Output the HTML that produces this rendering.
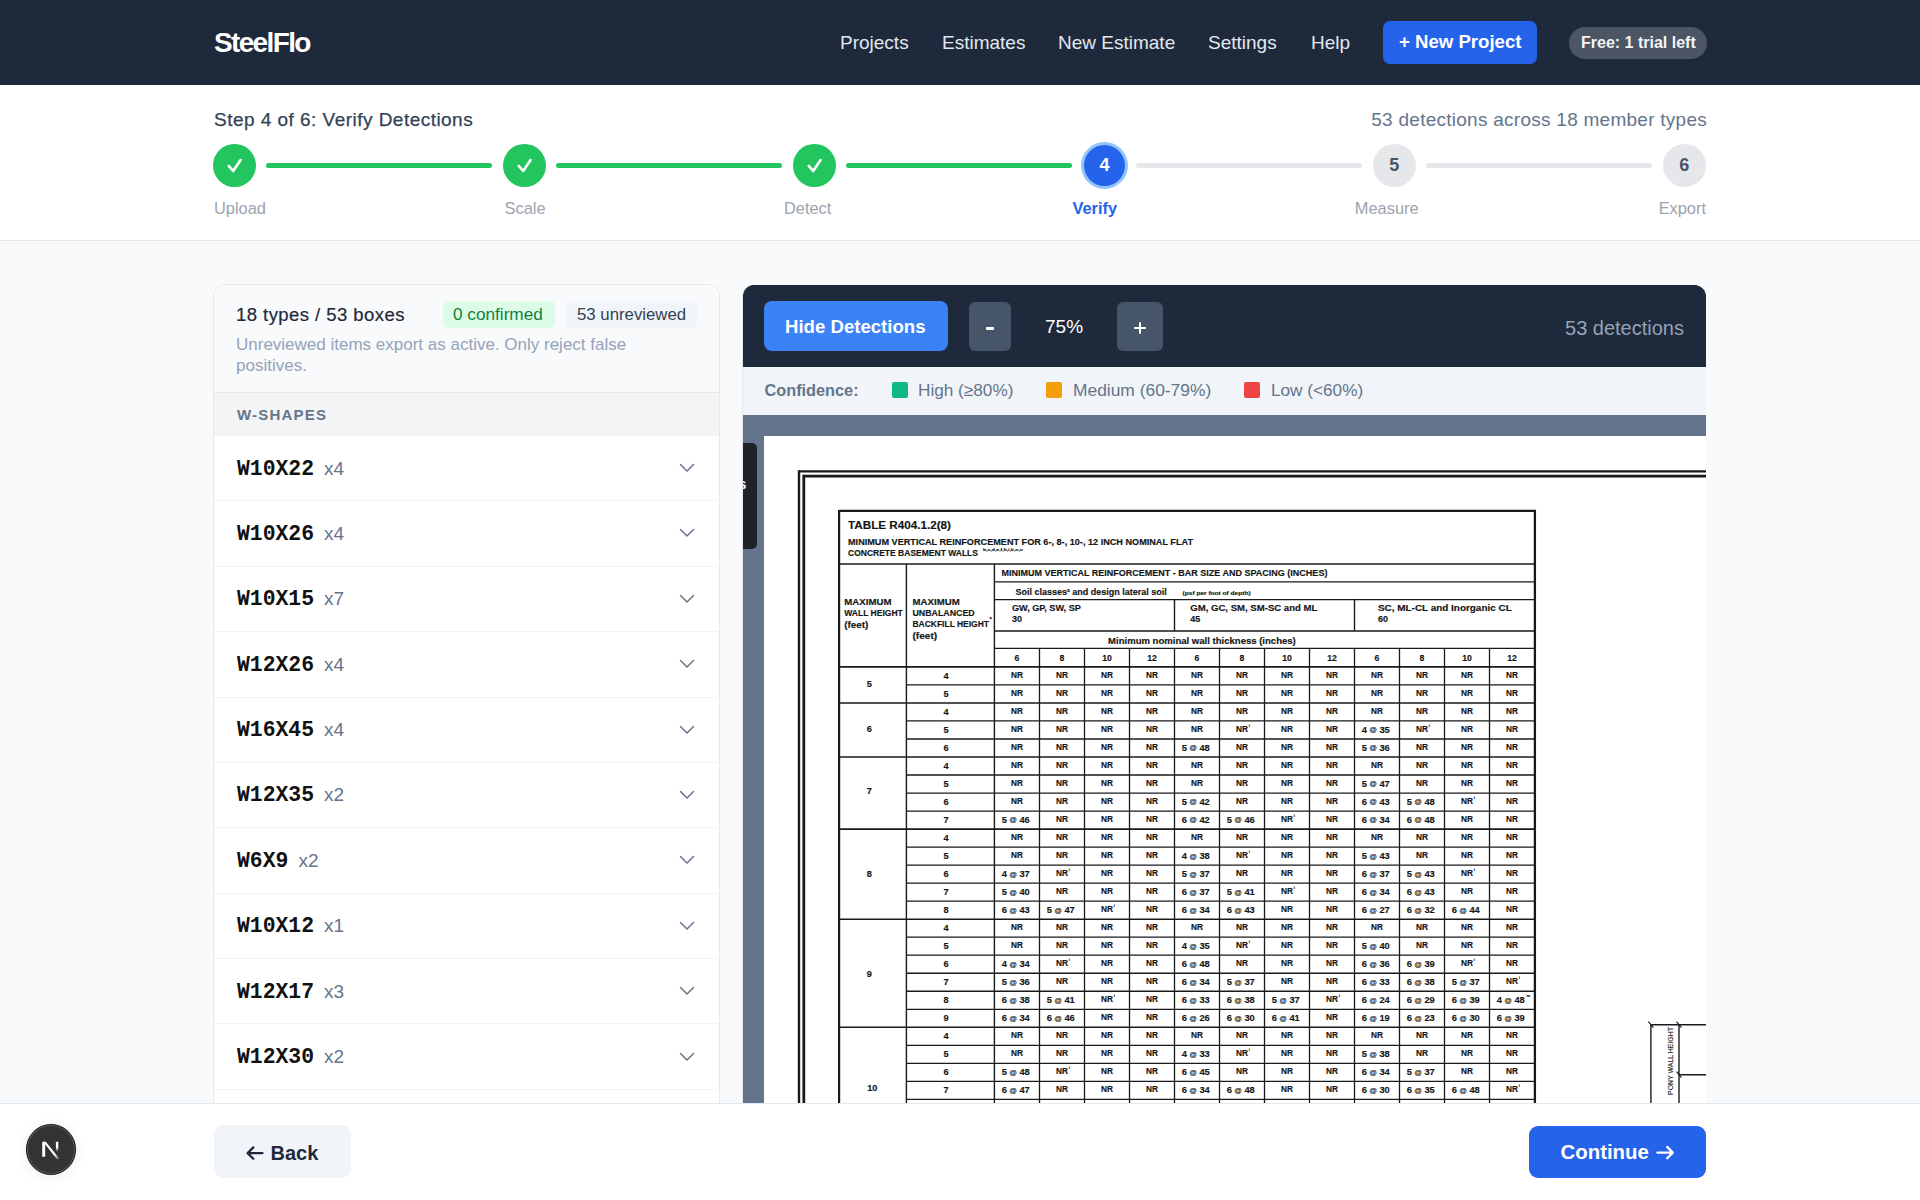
<!DOCTYPE html>
<html><head><meta charset="utf-8">
<style>
*{box-sizing:border-box;margin:0;padding:0}
html,body{width:1920px;height:1200px;overflow:hidden}
body{background:#f8fafc;position:relative;font-family:"Liberation Sans",sans-serif;color:#1e293b}
.a{position:absolute;white-space:nowrap;line-height:1}
#nav{position:absolute;left:0;top:0;width:1920px;height:85px;background:#1e293b;box-shadow:0 1px 2px rgba(0,0,0,.25)}
.nl{position:absolute;top:33px;font-size:19px;color:#e2e8f0;line-height:1}
#step{position:absolute;left:0;top:85px;width:1920px;height:156px;background:#fff;border-bottom:1px solid #e5e7eb}
.circ{position:absolute;width:42.6px;height:42.6px;border-radius:50%;top:59px}
.done{background:#22c55e}
.pend{background:#e5e7eb;color:#4b5563;font-size:18px;font-weight:700;text-align:center;line-height:42.6px}
.ln{position:absolute;top:77.8px;height:5px;border-radius:2.5px;width:226px}
.lbl{position:absolute;top:114.5px;font-size:16.4px;color:#9ca3af;line-height:1}
#left{position:absolute;left:213px;top:284px;width:507px;height:900px;background:#fff;border:1px solid #e5e7eb;border-radius:12px;overflow:hidden}
#lhead{position:absolute;left:0;top:0;width:505px;height:108px;background:#f9fafb;border-bottom:1px solid #e5e7eb}
#sec{position:absolute;left:0;top:108px;width:505px;height:43px;background:#f3f4f6}
.row{position:absolute;left:0;width:505px;height:65.39px;border-bottom:1px solid #f3f4f6;background:#fff}
.rn{position:absolute;left:23px;top:22.5px;font-family:"Liberation Mono",monospace;font-weight:700;font-size:21.4px;color:#111;line-height:1}
.rc{position:absolute;top:22.5px;font-size:19px;color:#64748b;line-height:1}
.chev{position:absolute;left:465px;top:27px;width:16px;height:10px}
#viewer{position:absolute;left:742px;top:285px;width:964px;height:900px;border-radius:12px;overflow:hidden;background:#64748b;border-left:1px solid #e2e8f0}
#tb{position:absolute;left:0;top:0;width:964px;height:82px;background:#1e293b}
#legend{position:absolute;left:0;top:82px;width:964px;height:48px;background:#f1f5f9}
#doc{position:absolute;left:21px;top:151px;width:960px;height:900px;background:#fff}
#foot{position:absolute;left:0;top:1103px;width:1920px;height:97px;background:#fff;border-top:1px solid #e2e8f0}
</style></head><body>
<div id="nav">
  <div class="a" style="left:214px;top:29px;font-size:28px;font-weight:700;color:#fff;letter-spacing:-1.65px">SteelFlo</div>
  <div class="nl" style="left:840px">Projects</div>
  <div class="nl" style="left:942px">Estimates</div>
  <div class="nl" style="left:1058px">New Estimate</div>
  <div class="nl" style="left:1208px">Settings</div>
  <div class="nl" style="left:1311px">Help</div>
  <div class="a" style="left:1383px;top:21px;width:154px;height:43px;background:#2563eb;border-radius:7px"></div>
  <div class="a" style="left:1399px;top:33px;font-size:18.6px;font-weight:700;color:#fff">+ New Project</div>
  <div class="a" style="left:1569px;top:26.5px;width:138px;height:32.5px;background:#4b5563;border-radius:16px"></div>
  <div class="a" style="left:1581px;top:34.5px;font-size:16px;font-weight:700;color:#f3f4f6">Free: 1 trial left</div>
</div>
<div id="step">
  <div class="a" style="left:214px;top:25.2px;font-size:19px;color:#334155;letter-spacing:0.47px;-webkit-text-stroke:0.25px #334155">Step 4 of 6: Verify Detections</div>
  <div class="a" style="right:213px;top:25px;font-size:19px;color:#64748b;letter-spacing:0.26px">53 detections across 18 member types</div>
  <div class="circ done" style="left:213px"><svg width="43" height="43" viewBox="0 0 43 43" style="position:absolute;left:0;top:0"><path d="M15.7 21.9 L20.2 27 L27.6 16" fill="none" stroke="#fff" stroke-width="2.6" stroke-linecap="round" stroke-linejoin="round"/></svg></div>
  <div class="circ done" style="left:503px"><svg width="43" height="43" viewBox="0 0 43 43" style="position:absolute;left:0;top:0"><path d="M15.7 21.9 L20.2 27 L27.6 16" fill="none" stroke="#fff" stroke-width="2.6" stroke-linecap="round" stroke-linejoin="round"/></svg></div>
  <div class="circ done" style="left:793px"><svg width="43" height="43" viewBox="0 0 43 43" style="position:absolute;left:0;top:0"><path d="M15.7 21.9 L20.2 27 L27.6 16" fill="none" stroke="#fff" stroke-width="2.6" stroke-linecap="round" stroke-linejoin="round"/></svg></div>
  <div class="circ" style="left:1080.8px;top:56.6px;width:47.4px;height:47.4px;background:#93c5fd"></div>
  <div class="circ" style="left:1083.7px;top:59.5px;width:41.6px;height:41.6px;background:#2563eb;color:#fff;font-size:18px;font-weight:700;text-align:center;line-height:41.6px">4</div>
  <div class="circ pend" style="left:1373px">5</div>
  <div class="circ pend" style="left:1663px">6</div>
  <div class="ln" style="left:266.3px;width:225.6px;background:#22c55e"></div>
  <div class="ln" style="left:556.3px;width:225.6px;background:#22c55e"></div>
  <div class="ln" style="left:846.3px;width:225.6px;background:#22c55e"></div>
  <div class="ln" style="left:1136.3px;width:225.6px;background:#e5e7eb"></div>
  <div class="ln" style="left:1426.3px;width:225.6px;background:#e5e7eb"></div>
  <div class="lbl" style="left:214px">Upload</div>
  <div class="lbl" style="left:504.6px">Scale</div>
  <div class="lbl" style="left:784px">Detect</div>
  <div class="lbl" style="left:1072.4px;color:#2563eb;font-weight:700">Verify</div>
  <div class="lbl" style="left:1354.8px">Measure</div>
  <div class="lbl" style="right:214px">Export</div>
</div>
<div id="left">
  <div id="lhead">
    <div class="a" style="left:22px;top:21px;font-size:18.5px;color:#1e293b;letter-spacing:0.45px;-webkit-text-stroke:0.2px #1e293b">18 types / 53 boxes</div>
    <div class="a" style="left:229px;top:16px;width:112px;height:27px;background:#dcfce7;border-radius:5px"></div>
    <div class="a" style="left:239px;top:21px;font-size:17.2px;color:#15803d">0 confirmed</div>
    <div class="a" style="left:352px;top:16px;width:131px;height:27px;background:#f1f5f9;border-radius:5px"></div>
    <div class="a" style="left:363px;top:22px;font-size:16.8px;color:#334155">53 unreviewed</div>
    <div class="a" style="left:22px;top:49px;font-size:17px;color:#94a3b8;line-height:21.3px;white-space:normal;width:420px">Unreviewed items export as active. Only reject false positives.</div>
  </div>
  <div id="sec"><div class="a" style="left:23px;top:14px;font-size:15px;font-weight:700;color:#64748b;letter-spacing:1.2px">W-SHAPES</div></div>
  <div class="row" style="top:151.00px"><div class="rn">W10X22</div><div class="rc" style="left:110.0px">x4</div><svg class="chev" viewBox="0 0 16 10"><path d="M1.5 1.5 L8 8 L14.5 1.5" fill="none" stroke="#64748b" stroke-width="1.5" stroke-linecap="round" stroke-linejoin="round"/></svg></div>
  <div class="row" style="top:216.39px"><div class="rn">W10X26</div><div class="rc" style="left:110.0px">x4</div><svg class="chev" viewBox="0 0 16 10"><path d="M1.5 1.5 L8 8 L14.5 1.5" fill="none" stroke="#64748b" stroke-width="1.5" stroke-linecap="round" stroke-linejoin="round"/></svg></div>
  <div class="row" style="top:281.78px"><div class="rn">W10X15</div><div class="rc" style="left:110.0px">x7</div><svg class="chev" viewBox="0 0 16 10"><path d="M1.5 1.5 L8 8 L14.5 1.5" fill="none" stroke="#64748b" stroke-width="1.5" stroke-linecap="round" stroke-linejoin="round"/></svg></div>
  <div class="row" style="top:347.17px"><div class="rn">W12X26</div><div class="rc" style="left:110.0px">x4</div><svg class="chev" viewBox="0 0 16 10"><path d="M1.5 1.5 L8 8 L14.5 1.5" fill="none" stroke="#64748b" stroke-width="1.5" stroke-linecap="round" stroke-linejoin="round"/></svg></div>
  <div class="row" style="top:412.56px"><div class="rn">W16X45</div><div class="rc" style="left:110.0px">x4</div><svg class="chev" viewBox="0 0 16 10"><path d="M1.5 1.5 L8 8 L14.5 1.5" fill="none" stroke="#64748b" stroke-width="1.5" stroke-linecap="round" stroke-linejoin="round"/></svg></div>
  <div class="row" style="top:477.95px"><div class="rn">W12X35</div><div class="rc" style="left:110.0px">x2</div><svg class="chev" viewBox="0 0 16 10"><path d="M1.5 1.5 L8 8 L14.5 1.5" fill="none" stroke="#64748b" stroke-width="1.5" stroke-linecap="round" stroke-linejoin="round"/></svg></div>
  <div class="row" style="top:543.34px"><div class="rn">W6X9</div><div class="rc" style="left:84.4px">x2</div><svg class="chev" viewBox="0 0 16 10"><path d="M1.5 1.5 L8 8 L14.5 1.5" fill="none" stroke="#64748b" stroke-width="1.5" stroke-linecap="round" stroke-linejoin="round"/></svg></div>
  <div class="row" style="top:608.73px"><div class="rn">W10X12</div><div class="rc" style="left:110.0px">x1</div><svg class="chev" viewBox="0 0 16 10"><path d="M1.5 1.5 L8 8 L14.5 1.5" fill="none" stroke="#64748b" stroke-width="1.5" stroke-linecap="round" stroke-linejoin="round"/></svg></div>
  <div class="row" style="top:674.12px"><div class="rn">W12X17</div><div class="rc" style="left:110.0px">x3</div><svg class="chev" viewBox="0 0 16 10"><path d="M1.5 1.5 L8 8 L14.5 1.5" fill="none" stroke="#64748b" stroke-width="1.5" stroke-linecap="round" stroke-linejoin="round"/></svg></div>
  <div class="row" style="top:739.51px"><div class="rn">W12X30</div><div class="rc" style="left:110.0px">x2</div><svg class="chev" viewBox="0 0 16 10"><path d="M1.5 1.5 L8 8 L14.5 1.5" fill="none" stroke="#64748b" stroke-width="1.5" stroke-linecap="round" stroke-linejoin="round"/></svg></div>
  <div class="row" style="top:804.90px"><div class="rn">W14X22</div><div class="rc" style="left:110.0px">x2</div><svg class="chev" viewBox="0 0 16 10"><path d="M1.5 1.5 L8 8 L14.5 1.5" fill="none" stroke="#64748b" stroke-width="1.5" stroke-linecap="round" stroke-linejoin="round"/></svg></div>
  <div class="row" style="top:870.29px"><div class="rn">W8X10</div><div class="rc" style="left:97.2px">x1</div><svg class="chev" viewBox="0 0 16 10"><path d="M1.5 1.5 L8 8 L14.5 1.5" fill="none" stroke="#64748b" stroke-width="1.5" stroke-linecap="round" stroke-linejoin="round"/></svg></div>
</div>
<div id="viewer">
  <div id="tb">
    <div class="a" style="left:21px;top:16px;width:184px;height:50px;background:#3b82f6;border-radius:8px"></div>
    <div class="a" style="left:42px;top:33px;font-size:18.6px;font-weight:700;color:#fff">Hide Detections</div>
    <div class="a" style="left:226px;top:17px;width:42px;height:49px;background:#475569;border-radius:6px"></div>
    <div class="a" style="left:243.25px;top:42.1px;width:7.8px;height:2.6px;background:#fff;border-radius:1px"></div>
    <div class="a" style="left:302px;top:32px;font-size:19px;color:#fff">75%</div>
    <div class="a" style="left:374px;top:17px;width:46px;height:49px;background:#475569;border-radius:6px"></div>
    <div class="a" style="left:391.3px;top:42.4px;width:11.7px;height:2.1px;background:#fff;border-radius:1px"></div><div class="a" style="left:396.3px;top:37.3px;width:2.05px;height:12.2px;background:#fff;border-radius:1px"></div>
    <div class="a" style="right:23px;top:33px;font-size:20px;color:#94a3b8">53 detections</div>
  </div>
  <div id="legend">
    <div class="a" style="left:21.5px;top:15px;font-size:16.3px;font-weight:700;color:#64748b">Confidence:</div>
    <div class="a" style="left:149px;top:15px;width:16px;height:16px;background:#10b981;border-radius:2px"></div>
    <div class="a" style="left:175px;top:15px;font-size:17.2px;color:#64748b">High (≥80%)</div>
    <div class="a" style="left:303px;top:15px;width:16px;height:16px;background:#f59e0b;border-radius:2px"></div>
    <div class="a" style="left:330px;top:15px;font-size:17.4px;color:#64748b">Medium (60-79%)</div>
    <div class="a" style="left:501px;top:15px;width:16px;height:16px;background:#ef4444;border-radius:2px"></div>
    <div class="a" style="left:528px;top:15px;font-size:17.2px;color:#64748b">Low (&lt;60%)</div>
  </div>
  <div id="doc"><svg width="960" height="900" viewBox="0 0 960 900" style="position:absolute;left:0;top:0;font-family:'Liberation Sans',sans-serif" font-weight="700" fill="#151515" stroke="#151515" stroke-width="0.15"><line x1="35.00" y1="35.35" x2="956.00" y2="35.35" stroke="#1a1a1a" stroke-width="2.4"/><line x1="35.00" y1="34.20" x2="35.00" y2="684.00" stroke="#1a1a1a" stroke-width="2.4"/><line x1="39.80" y1="40.15" x2="956.00" y2="40.15" stroke="#1a1a1a" stroke-width="2.8"/><line x1="39.80" y1="38.80" x2="39.80" y2="684.00" stroke="#1a1a1a" stroke-width="2.8"/><line x1="75.10" y1="74.90" x2="771.90" y2="74.90" stroke="#1a1a1a" stroke-width="2.3"/><line x1="75.10" y1="73.90" x2="75.10" y2="684.00" stroke="#1a1a1a" stroke-width="2.2"/><line x1="770.90" y1="73.90" x2="770.90" y2="684.00" stroke="#1a1a1a" stroke-width="2.3"/><line x1="75.10" y1="127.90" x2="770.90" y2="127.90" stroke="#1a1a1a" stroke-width="1.5"/><line x1="142.40" y1="127.90" x2="142.40" y2="684.00" stroke="#1a1a1a" stroke-width="1.4"/><line x1="230.40" y1="127.90" x2="230.40" y2="684.00" stroke="#1a1a1a" stroke-width="1.4"/><line x1="230.40" y1="145.90" x2="770.90" y2="145.90" stroke="#1a1a1a" stroke-width="1.4"/><line x1="230.40" y1="163.60" x2="770.90" y2="163.60" stroke="#1a1a1a" stroke-width="1.4"/><line x1="230.40" y1="195.00" x2="770.90" y2="195.00" stroke="#1a1a1a" stroke-width="1.4"/><line x1="230.40" y1="212.40" x2="770.90" y2="212.40" stroke="#1a1a1a" stroke-width="1.4"/><line x1="410.50" y1="163.60" x2="410.50" y2="195.00" stroke="#1a1a1a" stroke-width="1.4"/><line x1="590.50" y1="163.60" x2="590.50" y2="195.00" stroke="#1a1a1a" stroke-width="1.4"/><line x1="275.50" y1="212.40" x2="275.50" y2="684.00" stroke="#1a1a1a" stroke-width="1.3"/><line x1="320.50" y1="212.40" x2="320.50" y2="684.00" stroke="#1a1a1a" stroke-width="1.3"/><line x1="365.50" y1="212.40" x2="365.50" y2="684.00" stroke="#1a1a1a" stroke-width="1.3"/><line x1="410.50" y1="212.40" x2="410.50" y2="684.00" stroke="#1a1a1a" stroke-width="1.3"/><line x1="455.50" y1="212.40" x2="455.50" y2="684.00" stroke="#1a1a1a" stroke-width="1.3"/><line x1="500.50" y1="212.40" x2="500.50" y2="684.00" stroke="#1a1a1a" stroke-width="1.3"/><line x1="545.50" y1="212.40" x2="545.50" y2="684.00" stroke="#1a1a1a" stroke-width="1.3"/><line x1="590.50" y1="212.40" x2="590.50" y2="684.00" stroke="#1a1a1a" stroke-width="1.3"/><line x1="635.50" y1="212.40" x2="635.50" y2="684.00" stroke="#1a1a1a" stroke-width="1.3"/><line x1="680.50" y1="212.40" x2="680.50" y2="684.00" stroke="#1a1a1a" stroke-width="1.3"/><line x1="725.50" y1="212.40" x2="725.50" y2="684.00" stroke="#1a1a1a" stroke-width="1.3"/><line x1="75.10" y1="230.90" x2="770.90" y2="230.90" stroke="#1a1a1a" stroke-width="1.6"/><line x1="142.40" y1="248.92" x2="770.90" y2="248.92" stroke="#1a1a1a" stroke-width="1.3"/><line x1="75.10" y1="266.94" x2="770.90" y2="266.94" stroke="#1a1a1a" stroke-width="1.6"/><line x1="142.40" y1="284.96" x2="770.90" y2="284.96" stroke="#1a1a1a" stroke-width="1.3"/><line x1="142.40" y1="302.98" x2="770.90" y2="302.98" stroke="#1a1a1a" stroke-width="1.3"/><line x1="75.10" y1="321.00" x2="770.90" y2="321.00" stroke="#1a1a1a" stroke-width="1.6"/><line x1="142.40" y1="339.02" x2="770.90" y2="339.02" stroke="#1a1a1a" stroke-width="1.3"/><line x1="142.40" y1="357.04" x2="770.90" y2="357.04" stroke="#1a1a1a" stroke-width="1.3"/><line x1="142.40" y1="375.06" x2="770.90" y2="375.06" stroke="#1a1a1a" stroke-width="1.3"/><line x1="75.10" y1="393.08" x2="770.90" y2="393.08" stroke="#1a1a1a" stroke-width="1.6"/><line x1="142.40" y1="411.10" x2="770.90" y2="411.10" stroke="#1a1a1a" stroke-width="1.3"/><line x1="142.40" y1="429.12" x2="770.90" y2="429.12" stroke="#1a1a1a" stroke-width="1.3"/><line x1="142.40" y1="447.14" x2="770.90" y2="447.14" stroke="#1a1a1a" stroke-width="1.3"/><line x1="142.40" y1="465.16" x2="770.90" y2="465.16" stroke="#1a1a1a" stroke-width="1.3"/><line x1="75.10" y1="483.18" x2="770.90" y2="483.18" stroke="#1a1a1a" stroke-width="1.6"/><line x1="142.40" y1="501.20" x2="770.90" y2="501.20" stroke="#1a1a1a" stroke-width="1.3"/><line x1="142.40" y1="519.22" x2="770.90" y2="519.22" stroke="#1a1a1a" stroke-width="1.3"/><line x1="142.40" y1="537.24" x2="770.90" y2="537.24" stroke="#1a1a1a" stroke-width="1.3"/><line x1="142.40" y1="555.26" x2="770.90" y2="555.26" stroke="#1a1a1a" stroke-width="1.3"/><line x1="142.40" y1="573.28" x2="770.90" y2="573.28" stroke="#1a1a1a" stroke-width="1.3"/><line x1="75.10" y1="591.30" x2="770.90" y2="591.30" stroke="#1a1a1a" stroke-width="1.6"/><line x1="142.40" y1="609.32" x2="770.90" y2="609.32" stroke="#1a1a1a" stroke-width="1.3"/><line x1="142.40" y1="627.34" x2="770.90" y2="627.34" stroke="#1a1a1a" stroke-width="1.3"/><line x1="142.40" y1="645.36" x2="770.90" y2="645.36" stroke="#1a1a1a" stroke-width="1.3"/><line x1="142.40" y1="663.38" x2="770.90" y2="663.38" stroke="#1a1a1a" stroke-width="1.3"/><line x1="142.40" y1="681.40" x2="770.90" y2="681.40" stroke="#1a1a1a" stroke-width="1.3"/><text x="84.00" y="93.30" font-size="11.5" text-anchor="start" textLength="103" lengthAdjust="spacingAndGlyphs">TABLE R404.1.2(8)</text><text x="84.00" y="109.00" font-size="8.4" text-anchor="start" textLength="345" lengthAdjust="spacingAndGlyphs">MINIMUM VERTICAL REINFORCEMENT FOR 6-, 8-, 10-, 12 INCH NOMINAL FLAT</text><text x="84.00" y="119.80" font-size="8.4" text-anchor="start" textLength="130" lengthAdjust="spacingAndGlyphs">CONCRETE BASEMENT WALLS</text><text x="219.00" y="114.50" font-size="4.2" text-anchor="start" textLength="40" lengthAdjust="spacingAndGlyphs">b,c,d,e,f,h,i,k,n,o</text><text x="80.30" y="169.20" font-size="8.6" text-anchor="start" textLength="47.2" lengthAdjust="spacingAndGlyphs">MAXIMUM</text><text x="80.30" y="180.40" font-size="8.6" text-anchor="start" textLength="58.5" lengthAdjust="spacingAndGlyphs">WALL HEIGHT</text><text x="80.30" y="191.60" font-size="8.6" text-anchor="start" textLength="24" lengthAdjust="spacingAndGlyphs">(feet)</text><text x="148.50" y="169.20" font-size="8.6" text-anchor="start" textLength="47.2" lengthAdjust="spacingAndGlyphs">MAXIMUM</text><text x="148.50" y="180.30" font-size="8.6" text-anchor="start" textLength="62.2" lengthAdjust="spacingAndGlyphs">UNBALANCED</text><text x="148.50" y="191.40" font-size="8.6" text-anchor="start" textLength="76.5" lengthAdjust="spacingAndGlyphs">BACKFILL HEIGHT</text><text x="148.50" y="202.50" font-size="8.6" text-anchor="start" textLength="24.7" lengthAdjust="spacingAndGlyphs">(feet)</text><text x="225.50" y="184.50" font-size="6" text-anchor="start">*</text><text x="237.40" y="139.90" font-size="9" text-anchor="start" textLength="326" lengthAdjust="spacingAndGlyphs">MINIMUM VERTICAL REINFORCEMENT - BAR SIZE AND SPACING (INCHES)</text><text x="251.50" y="158.70" font-size="9" text-anchor="start">Soil classes<tspan font-size="5" dy="-3">a</tspan><tspan dy="3"> and design lateral soil</tspan></text><text x="418.60" y="158.70" font-size="5.3" text-anchor="start" textLength="68" lengthAdjust="spacingAndGlyphs">(psf per foot of depth)</text><text x="247.90" y="174.70" font-size="9" text-anchor="start" textLength="69" lengthAdjust="spacingAndGlyphs">GW, GP, SW, SP</text><text x="247.90" y="186.40" font-size="9" text-anchor="start">30</text><text x="426.30" y="174.70" font-size="9" text-anchor="start" textLength="127" lengthAdjust="spacingAndGlyphs">GM, GC, SM, SM-SC and ML</text><text x="426.30" y="186.40" font-size="9" text-anchor="start">45</text><text x="614.00" y="174.70" font-size="9" text-anchor="start" textLength="133.7" lengthAdjust="spacingAndGlyphs">SC, ML-CL and Inorganic CL</text><text x="614.00" y="186.40" font-size="9" text-anchor="start">60</text><text x="344.10" y="207.70" font-size="9" text-anchor="start" textLength="187.7" lengthAdjust="spacingAndGlyphs">Minimum nominal wall thickness (inches)</text><text x="253.00" y="225.20" font-size="8.7" text-anchor="middle">6</text><text x="298.00" y="225.20" font-size="8.7" text-anchor="middle">8</text><text x="343.00" y="225.20" font-size="8.7" text-anchor="middle">10</text><text x="388.00" y="225.20" font-size="8.7" text-anchor="middle">12</text><text x="433.00" y="225.20" font-size="8.7" text-anchor="middle">6</text><text x="478.00" y="225.20" font-size="8.7" text-anchor="middle">8</text><text x="523.00" y="225.20" font-size="8.7" text-anchor="middle">10</text><text x="568.00" y="225.20" font-size="8.7" text-anchor="middle">12</text><text x="613.00" y="225.20" font-size="8.7" text-anchor="middle">6</text><text x="658.00" y="225.20" font-size="8.7" text-anchor="middle">8</text><text x="703.00" y="225.20" font-size="8.7" text-anchor="middle">10</text><text x="748.00" y="225.20" font-size="8.7" text-anchor="middle">12</text><text x="105.40" y="251.22" font-size="9.2" text-anchor="middle">5</text><text x="182.00" y="242.50" font-size="9.2" text-anchor="middle">4</text><text x="253.00" y="241.90" font-size="9.2" text-anchor="middle" textLength="12" lengthAdjust="spacingAndGlyphs">NR</text><text x="298.00" y="241.90" font-size="9.2" text-anchor="middle" textLength="12" lengthAdjust="spacingAndGlyphs">NR</text><text x="343.00" y="241.90" font-size="9.2" text-anchor="middle" textLength="12" lengthAdjust="spacingAndGlyphs">NR</text><text x="388.00" y="241.90" font-size="9.2" text-anchor="middle" textLength="12" lengthAdjust="spacingAndGlyphs">NR</text><text x="433.00" y="241.90" font-size="9.2" text-anchor="middle" textLength="12" lengthAdjust="spacingAndGlyphs">NR</text><text x="478.00" y="241.90" font-size="9.2" text-anchor="middle" textLength="12" lengthAdjust="spacingAndGlyphs">NR</text><text x="523.00" y="241.90" font-size="9.2" text-anchor="middle" textLength="12" lengthAdjust="spacingAndGlyphs">NR</text><text x="568.00" y="241.90" font-size="9.2" text-anchor="middle" textLength="12" lengthAdjust="spacingAndGlyphs">NR</text><text x="613.00" y="241.90" font-size="9.2" text-anchor="middle" textLength="12" lengthAdjust="spacingAndGlyphs">NR</text><text x="658.00" y="241.90" font-size="9.2" text-anchor="middle" textLength="12" lengthAdjust="spacingAndGlyphs">NR</text><text x="703.00" y="241.90" font-size="9.2" text-anchor="middle" textLength="12" lengthAdjust="spacingAndGlyphs">NR</text><text x="748.00" y="241.90" font-size="9.2" text-anchor="middle" textLength="12" lengthAdjust="spacingAndGlyphs">NR</text><text x="182.00" y="260.52" font-size="9.2" text-anchor="middle">5</text><text x="253.00" y="259.92" font-size="9.2" text-anchor="middle" textLength="12" lengthAdjust="spacingAndGlyphs">NR</text><text x="298.00" y="259.92" font-size="9.2" text-anchor="middle" textLength="12" lengthAdjust="spacingAndGlyphs">NR</text><text x="343.00" y="259.92" font-size="9.2" text-anchor="middle" textLength="12" lengthAdjust="spacingAndGlyphs">NR</text><text x="388.00" y="259.92" font-size="9.2" text-anchor="middle" textLength="12" lengthAdjust="spacingAndGlyphs">NR</text><text x="433.00" y="259.92" font-size="9.2" text-anchor="middle" textLength="12" lengthAdjust="spacingAndGlyphs">NR</text><text x="478.00" y="259.92" font-size="9.2" text-anchor="middle" textLength="12" lengthAdjust="spacingAndGlyphs">NR</text><text x="523.00" y="259.92" font-size="9.2" text-anchor="middle" textLength="12" lengthAdjust="spacingAndGlyphs">NR</text><text x="568.00" y="259.92" font-size="9.2" text-anchor="middle" textLength="12" lengthAdjust="spacingAndGlyphs">NR</text><text x="613.00" y="259.92" font-size="9.2" text-anchor="middle" textLength="12" lengthAdjust="spacingAndGlyphs">NR</text><text x="658.00" y="259.92" font-size="9.2" text-anchor="middle" textLength="12" lengthAdjust="spacingAndGlyphs">NR</text><text x="703.00" y="259.92" font-size="9.2" text-anchor="middle" textLength="12" lengthAdjust="spacingAndGlyphs">NR</text><text x="748.00" y="259.92" font-size="9.2" text-anchor="middle" textLength="12" lengthAdjust="spacingAndGlyphs">NR</text><text x="105.40" y="296.27" font-size="9.2" text-anchor="middle">6</text><text x="182.00" y="278.54" font-size="9.2" text-anchor="middle">4</text><text x="253.00" y="277.94" font-size="9.2" text-anchor="middle" textLength="12" lengthAdjust="spacingAndGlyphs">NR</text><text x="298.00" y="277.94" font-size="9.2" text-anchor="middle" textLength="12" lengthAdjust="spacingAndGlyphs">NR</text><text x="343.00" y="277.94" font-size="9.2" text-anchor="middle" textLength="12" lengthAdjust="spacingAndGlyphs">NR</text><text x="388.00" y="277.94" font-size="9.2" text-anchor="middle" textLength="12" lengthAdjust="spacingAndGlyphs">NR</text><text x="433.00" y="277.94" font-size="9.2" text-anchor="middle" textLength="12" lengthAdjust="spacingAndGlyphs">NR</text><text x="478.00" y="277.94" font-size="9.2" text-anchor="middle" textLength="12" lengthAdjust="spacingAndGlyphs">NR</text><text x="523.00" y="277.94" font-size="9.2" text-anchor="middle" textLength="12" lengthAdjust="spacingAndGlyphs">NR</text><text x="568.00" y="277.94" font-size="9.2" text-anchor="middle" textLength="12" lengthAdjust="spacingAndGlyphs">NR</text><text x="613.00" y="277.94" font-size="9.2" text-anchor="middle" textLength="12" lengthAdjust="spacingAndGlyphs">NR</text><text x="658.00" y="277.94" font-size="9.2" text-anchor="middle" textLength="12" lengthAdjust="spacingAndGlyphs">NR</text><text x="703.00" y="277.94" font-size="9.2" text-anchor="middle" textLength="12" lengthAdjust="spacingAndGlyphs">NR</text><text x="748.00" y="277.94" font-size="9.2" text-anchor="middle" textLength="12" lengthAdjust="spacingAndGlyphs">NR</text><text x="182.00" y="296.56" font-size="9.2" text-anchor="middle">5</text><text x="253.00" y="295.96" font-size="9.2" text-anchor="middle" textLength="12" lengthAdjust="spacingAndGlyphs">NR</text><text x="298.00" y="295.96" font-size="9.2" text-anchor="middle" textLength="12" lengthAdjust="spacingAndGlyphs">NR</text><text x="343.00" y="295.96" font-size="9.2" text-anchor="middle" textLength="12" lengthAdjust="spacingAndGlyphs">NR</text><text x="388.00" y="295.96" font-size="9.2" text-anchor="middle" textLength="12" lengthAdjust="spacingAndGlyphs">NR</text><text x="433.00" y="295.96" font-size="9.2" text-anchor="middle" textLength="12" lengthAdjust="spacingAndGlyphs">NR</text><text x="478.00" y="295.96" font-size="9.2" text-anchor="middle" textLength="12" lengthAdjust="spacingAndGlyphs">NR</text><text x="484.80" y="290.96" font-size="4.2" text-anchor="start">i</text><text x="523.00" y="295.96" font-size="9.2" text-anchor="middle" textLength="12" lengthAdjust="spacingAndGlyphs">NR</text><text x="568.00" y="295.96" font-size="9.2" text-anchor="middle" textLength="12" lengthAdjust="spacingAndGlyphs">NR</text><text x="611.80" y="296.66" font-size="9.6" text-anchor="middle" textLength="28" lengthAdjust="spacingAndGlyphs">4 <tspan font-size="7.6" dy="-0.3">@</tspan><tspan dy="0.3"> 35</tspan></text><text x="658.00" y="295.96" font-size="9.2" text-anchor="middle" textLength="12" lengthAdjust="spacingAndGlyphs">NR</text><text x="664.80" y="290.96" font-size="4.2" text-anchor="start">i</text><text x="703.00" y="295.96" font-size="9.2" text-anchor="middle" textLength="12" lengthAdjust="spacingAndGlyphs">NR</text><text x="748.00" y="295.96" font-size="9.2" text-anchor="middle" textLength="12" lengthAdjust="spacingAndGlyphs">NR</text><text x="182.00" y="314.58" font-size="9.2" text-anchor="middle">6</text><text x="253.00" y="313.98" font-size="9.2" text-anchor="middle" textLength="12" lengthAdjust="spacingAndGlyphs">NR</text><text x="298.00" y="313.98" font-size="9.2" text-anchor="middle" textLength="12" lengthAdjust="spacingAndGlyphs">NR</text><text x="343.00" y="313.98" font-size="9.2" text-anchor="middle" textLength="12" lengthAdjust="spacingAndGlyphs">NR</text><text x="388.00" y="313.98" font-size="9.2" text-anchor="middle" textLength="12" lengthAdjust="spacingAndGlyphs">NR</text><text x="431.80" y="314.68" font-size="9.6" text-anchor="middle" textLength="28" lengthAdjust="spacingAndGlyphs">5 <tspan font-size="7.6" dy="-0.3">@</tspan><tspan dy="0.3"> 48</tspan></text><text x="478.00" y="313.98" font-size="9.2" text-anchor="middle" textLength="12" lengthAdjust="spacingAndGlyphs">NR</text><text x="523.00" y="313.98" font-size="9.2" text-anchor="middle" textLength="12" lengthAdjust="spacingAndGlyphs">NR</text><text x="568.00" y="313.98" font-size="9.2" text-anchor="middle" textLength="12" lengthAdjust="spacingAndGlyphs">NR</text><text x="611.80" y="314.68" font-size="9.6" text-anchor="middle" textLength="28" lengthAdjust="spacingAndGlyphs">5 <tspan font-size="7.6" dy="-0.3">@</tspan><tspan dy="0.3"> 36</tspan></text><text x="658.00" y="313.98" font-size="9.2" text-anchor="middle" textLength="12" lengthAdjust="spacingAndGlyphs">NR</text><text x="703.00" y="313.98" font-size="9.2" text-anchor="middle" textLength="12" lengthAdjust="spacingAndGlyphs">NR</text><text x="748.00" y="313.98" font-size="9.2" text-anchor="middle" textLength="12" lengthAdjust="spacingAndGlyphs">NR</text><text x="105.40" y="358.04" font-size="9.2" text-anchor="middle">7</text><text x="182.00" y="332.60" font-size="9.2" text-anchor="middle">4</text><text x="253.00" y="332.00" font-size="9.2" text-anchor="middle" textLength="12" lengthAdjust="spacingAndGlyphs">NR</text><text x="298.00" y="332.00" font-size="9.2" text-anchor="middle" textLength="12" lengthAdjust="spacingAndGlyphs">NR</text><text x="343.00" y="332.00" font-size="9.2" text-anchor="middle" textLength="12" lengthAdjust="spacingAndGlyphs">NR</text><text x="388.00" y="332.00" font-size="9.2" text-anchor="middle" textLength="12" lengthAdjust="spacingAndGlyphs">NR</text><text x="433.00" y="332.00" font-size="9.2" text-anchor="middle" textLength="12" lengthAdjust="spacingAndGlyphs">NR</text><text x="478.00" y="332.00" font-size="9.2" text-anchor="middle" textLength="12" lengthAdjust="spacingAndGlyphs">NR</text><text x="523.00" y="332.00" font-size="9.2" text-anchor="middle" textLength="12" lengthAdjust="spacingAndGlyphs">NR</text><text x="568.00" y="332.00" font-size="9.2" text-anchor="middle" textLength="12" lengthAdjust="spacingAndGlyphs">NR</text><text x="613.00" y="332.00" font-size="9.2" text-anchor="middle" textLength="12" lengthAdjust="spacingAndGlyphs">NR</text><text x="658.00" y="332.00" font-size="9.2" text-anchor="middle" textLength="12" lengthAdjust="spacingAndGlyphs">NR</text><text x="703.00" y="332.00" font-size="9.2" text-anchor="middle" textLength="12" lengthAdjust="spacingAndGlyphs">NR</text><text x="748.00" y="332.00" font-size="9.2" text-anchor="middle" textLength="12" lengthAdjust="spacingAndGlyphs">NR</text><text x="182.00" y="350.62" font-size="9.2" text-anchor="middle">5</text><text x="253.00" y="350.02" font-size="9.2" text-anchor="middle" textLength="12" lengthAdjust="spacingAndGlyphs">NR</text><text x="298.00" y="350.02" font-size="9.2" text-anchor="middle" textLength="12" lengthAdjust="spacingAndGlyphs">NR</text><text x="343.00" y="350.02" font-size="9.2" text-anchor="middle" textLength="12" lengthAdjust="spacingAndGlyphs">NR</text><text x="388.00" y="350.02" font-size="9.2" text-anchor="middle" textLength="12" lengthAdjust="spacingAndGlyphs">NR</text><text x="433.00" y="350.02" font-size="9.2" text-anchor="middle" textLength="12" lengthAdjust="spacingAndGlyphs">NR</text><text x="478.00" y="350.02" font-size="9.2" text-anchor="middle" textLength="12" lengthAdjust="spacingAndGlyphs">NR</text><text x="523.00" y="350.02" font-size="9.2" text-anchor="middle" textLength="12" lengthAdjust="spacingAndGlyphs">NR</text><text x="568.00" y="350.02" font-size="9.2" text-anchor="middle" textLength="12" lengthAdjust="spacingAndGlyphs">NR</text><text x="611.80" y="350.72" font-size="9.6" text-anchor="middle" textLength="28" lengthAdjust="spacingAndGlyphs">5 <tspan font-size="7.6" dy="-0.3">@</tspan><tspan dy="0.3"> 47</tspan></text><text x="658.00" y="350.02" font-size="9.2" text-anchor="middle" textLength="12" lengthAdjust="spacingAndGlyphs">NR</text><text x="703.00" y="350.02" font-size="9.2" text-anchor="middle" textLength="12" lengthAdjust="spacingAndGlyphs">NR</text><text x="748.00" y="350.02" font-size="9.2" text-anchor="middle" textLength="12" lengthAdjust="spacingAndGlyphs">NR</text><text x="182.00" y="368.64" font-size="9.2" text-anchor="middle">6</text><text x="253.00" y="368.04" font-size="9.2" text-anchor="middle" textLength="12" lengthAdjust="spacingAndGlyphs">NR</text><text x="298.00" y="368.04" font-size="9.2" text-anchor="middle" textLength="12" lengthAdjust="spacingAndGlyphs">NR</text><text x="343.00" y="368.04" font-size="9.2" text-anchor="middle" textLength="12" lengthAdjust="spacingAndGlyphs">NR</text><text x="388.00" y="368.04" font-size="9.2" text-anchor="middle" textLength="12" lengthAdjust="spacingAndGlyphs">NR</text><text x="431.80" y="368.74" font-size="9.6" text-anchor="middle" textLength="28" lengthAdjust="spacingAndGlyphs">5 <tspan font-size="7.6" dy="-0.3">@</tspan><tspan dy="0.3"> 42</tspan></text><text x="478.00" y="368.04" font-size="9.2" text-anchor="middle" textLength="12" lengthAdjust="spacingAndGlyphs">NR</text><text x="523.00" y="368.04" font-size="9.2" text-anchor="middle" textLength="12" lengthAdjust="spacingAndGlyphs">NR</text><text x="568.00" y="368.04" font-size="9.2" text-anchor="middle" textLength="12" lengthAdjust="spacingAndGlyphs">NR</text><text x="611.80" y="368.74" font-size="9.6" text-anchor="middle" textLength="28" lengthAdjust="spacingAndGlyphs">6 <tspan font-size="7.6" dy="-0.3">@</tspan><tspan dy="0.3"> 43</tspan></text><text x="656.80" y="368.74" font-size="9.6" text-anchor="middle" textLength="28" lengthAdjust="spacingAndGlyphs">5 <tspan font-size="7.6" dy="-0.3">@</tspan><tspan dy="0.3"> 48</tspan></text><text x="703.00" y="368.04" font-size="9.2" text-anchor="middle" textLength="12" lengthAdjust="spacingAndGlyphs">NR</text><text x="709.80" y="363.04" font-size="4.2" text-anchor="start">i</text><text x="748.00" y="368.04" font-size="9.2" text-anchor="middle" textLength="12" lengthAdjust="spacingAndGlyphs">NR</text><text x="182.00" y="386.66" font-size="9.2" text-anchor="middle">7</text><text x="251.80" y="386.76" font-size="9.6" text-anchor="middle" textLength="28" lengthAdjust="spacingAndGlyphs">5 <tspan font-size="7.6" dy="-0.3">@</tspan><tspan dy="0.3"> 46</tspan></text><text x="298.00" y="386.06" font-size="9.2" text-anchor="middle" textLength="12" lengthAdjust="spacingAndGlyphs">NR</text><text x="343.00" y="386.06" font-size="9.2" text-anchor="middle" textLength="12" lengthAdjust="spacingAndGlyphs">NR</text><text x="388.00" y="386.06" font-size="9.2" text-anchor="middle" textLength="12" lengthAdjust="spacingAndGlyphs">NR</text><text x="431.80" y="386.76" font-size="9.6" text-anchor="middle" textLength="28" lengthAdjust="spacingAndGlyphs">6 <tspan font-size="7.6" dy="-0.3">@</tspan><tspan dy="0.3"> 42</tspan></text><text x="476.80" y="386.76" font-size="9.6" text-anchor="middle" textLength="28" lengthAdjust="spacingAndGlyphs">5 <tspan font-size="7.6" dy="-0.3">@</tspan><tspan dy="0.3"> 46</tspan></text><text x="523.00" y="386.06" font-size="9.2" text-anchor="middle" textLength="12" lengthAdjust="spacingAndGlyphs">NR</text><text x="529.80" y="381.06" font-size="4.2" text-anchor="start">i</text><text x="568.00" y="386.06" font-size="9.2" text-anchor="middle" textLength="12" lengthAdjust="spacingAndGlyphs">NR</text><text x="611.80" y="386.76" font-size="9.6" text-anchor="middle" textLength="28" lengthAdjust="spacingAndGlyphs">6 <tspan font-size="7.6" dy="-0.3">@</tspan><tspan dy="0.3"> 34</tspan></text><text x="656.80" y="386.76" font-size="9.6" text-anchor="middle" textLength="28" lengthAdjust="spacingAndGlyphs">6 <tspan font-size="7.6" dy="-0.3">@</tspan><tspan dy="0.3"> 48</tspan></text><text x="703.00" y="386.06" font-size="9.2" text-anchor="middle" textLength="12" lengthAdjust="spacingAndGlyphs">NR</text><text x="748.00" y="386.06" font-size="9.2" text-anchor="middle" textLength="12" lengthAdjust="spacingAndGlyphs">NR</text><text x="105.40" y="440.93" font-size="9.2" text-anchor="middle">8</text><text x="182.00" y="404.68" font-size="9.2" text-anchor="middle">4</text><text x="253.00" y="404.08" font-size="9.2" text-anchor="middle" textLength="12" lengthAdjust="spacingAndGlyphs">NR</text><text x="298.00" y="404.08" font-size="9.2" text-anchor="middle" textLength="12" lengthAdjust="spacingAndGlyphs">NR</text><text x="343.00" y="404.08" font-size="9.2" text-anchor="middle" textLength="12" lengthAdjust="spacingAndGlyphs">NR</text><text x="388.00" y="404.08" font-size="9.2" text-anchor="middle" textLength="12" lengthAdjust="spacingAndGlyphs">NR</text><text x="433.00" y="404.08" font-size="9.2" text-anchor="middle" textLength="12" lengthAdjust="spacingAndGlyphs">NR</text><text x="478.00" y="404.08" font-size="9.2" text-anchor="middle" textLength="12" lengthAdjust="spacingAndGlyphs">NR</text><text x="523.00" y="404.08" font-size="9.2" text-anchor="middle" textLength="12" lengthAdjust="spacingAndGlyphs">NR</text><text x="568.00" y="404.08" font-size="9.2" text-anchor="middle" textLength="12" lengthAdjust="spacingAndGlyphs">NR</text><text x="613.00" y="404.08" font-size="9.2" text-anchor="middle" textLength="12" lengthAdjust="spacingAndGlyphs">NR</text><text x="658.00" y="404.08" font-size="9.2" text-anchor="middle" textLength="12" lengthAdjust="spacingAndGlyphs">NR</text><text x="703.00" y="404.08" font-size="9.2" text-anchor="middle" textLength="12" lengthAdjust="spacingAndGlyphs">NR</text><text x="748.00" y="404.08" font-size="9.2" text-anchor="middle" textLength="12" lengthAdjust="spacingAndGlyphs">NR</text><text x="182.00" y="422.70" font-size="9.2" text-anchor="middle">5</text><text x="253.00" y="422.10" font-size="9.2" text-anchor="middle" textLength="12" lengthAdjust="spacingAndGlyphs">NR</text><text x="298.00" y="422.10" font-size="9.2" text-anchor="middle" textLength="12" lengthAdjust="spacingAndGlyphs">NR</text><text x="343.00" y="422.10" font-size="9.2" text-anchor="middle" textLength="12" lengthAdjust="spacingAndGlyphs">NR</text><text x="388.00" y="422.10" font-size="9.2" text-anchor="middle" textLength="12" lengthAdjust="spacingAndGlyphs">NR</text><text x="431.80" y="422.80" font-size="9.6" text-anchor="middle" textLength="28" lengthAdjust="spacingAndGlyphs">4 <tspan font-size="7.6" dy="-0.3">@</tspan><tspan dy="0.3"> 38</tspan></text><text x="478.00" y="422.10" font-size="9.2" text-anchor="middle" textLength="12" lengthAdjust="spacingAndGlyphs">NR</text><text x="484.80" y="417.10" font-size="4.2" text-anchor="start">i</text><text x="523.00" y="422.10" font-size="9.2" text-anchor="middle" textLength="12" lengthAdjust="spacingAndGlyphs">NR</text><text x="568.00" y="422.10" font-size="9.2" text-anchor="middle" textLength="12" lengthAdjust="spacingAndGlyphs">NR</text><text x="611.80" y="422.80" font-size="9.6" text-anchor="middle" textLength="28" lengthAdjust="spacingAndGlyphs">5 <tspan font-size="7.6" dy="-0.3">@</tspan><tspan dy="0.3"> 43</tspan></text><text x="658.00" y="422.10" font-size="9.2" text-anchor="middle" textLength="12" lengthAdjust="spacingAndGlyphs">NR</text><text x="703.00" y="422.10" font-size="9.2" text-anchor="middle" textLength="12" lengthAdjust="spacingAndGlyphs">NR</text><text x="748.00" y="422.10" font-size="9.2" text-anchor="middle" textLength="12" lengthAdjust="spacingAndGlyphs">NR</text><text x="182.00" y="440.72" font-size="9.2" text-anchor="middle">6</text><text x="251.80" y="440.82" font-size="9.6" text-anchor="middle" textLength="28" lengthAdjust="spacingAndGlyphs">4 <tspan font-size="7.6" dy="-0.3">@</tspan><tspan dy="0.3"> 37</tspan></text><text x="298.00" y="440.12" font-size="9.2" text-anchor="middle" textLength="12" lengthAdjust="spacingAndGlyphs">NR</text><text x="304.80" y="435.12" font-size="4.2" text-anchor="start">i</text><text x="343.00" y="440.12" font-size="9.2" text-anchor="middle" textLength="12" lengthAdjust="spacingAndGlyphs">NR</text><text x="388.00" y="440.12" font-size="9.2" text-anchor="middle" textLength="12" lengthAdjust="spacingAndGlyphs">NR</text><text x="431.80" y="440.82" font-size="9.6" text-anchor="middle" textLength="28" lengthAdjust="spacingAndGlyphs">5 <tspan font-size="7.6" dy="-0.3">@</tspan><tspan dy="0.3"> 37</tspan></text><text x="478.00" y="440.12" font-size="9.2" text-anchor="middle" textLength="12" lengthAdjust="spacingAndGlyphs">NR</text><text x="523.00" y="440.12" font-size="9.2" text-anchor="middle" textLength="12" lengthAdjust="spacingAndGlyphs">NR</text><text x="568.00" y="440.12" font-size="9.2" text-anchor="middle" textLength="12" lengthAdjust="spacingAndGlyphs">NR</text><text x="611.80" y="440.82" font-size="9.6" text-anchor="middle" textLength="28" lengthAdjust="spacingAndGlyphs">6 <tspan font-size="7.6" dy="-0.3">@</tspan><tspan dy="0.3"> 37</tspan></text><text x="656.80" y="440.82" font-size="9.6" text-anchor="middle" textLength="28" lengthAdjust="spacingAndGlyphs">5 <tspan font-size="7.6" dy="-0.3">@</tspan><tspan dy="0.3"> 43</tspan></text><text x="703.00" y="440.12" font-size="9.2" text-anchor="middle" textLength="12" lengthAdjust="spacingAndGlyphs">NR</text><text x="709.80" y="435.12" font-size="4.2" text-anchor="start">i</text><text x="748.00" y="440.12" font-size="9.2" text-anchor="middle" textLength="12" lengthAdjust="spacingAndGlyphs">NR</text><text x="182.00" y="458.74" font-size="9.2" text-anchor="middle">7</text><text x="251.80" y="458.84" font-size="9.6" text-anchor="middle" textLength="28" lengthAdjust="spacingAndGlyphs">5 <tspan font-size="7.6" dy="-0.3">@</tspan><tspan dy="0.3"> 40</tspan></text><text x="298.00" y="458.14" font-size="9.2" text-anchor="middle" textLength="12" lengthAdjust="spacingAndGlyphs">NR</text><text x="343.00" y="458.14" font-size="9.2" text-anchor="middle" textLength="12" lengthAdjust="spacingAndGlyphs">NR</text><text x="388.00" y="458.14" font-size="9.2" text-anchor="middle" textLength="12" lengthAdjust="spacingAndGlyphs">NR</text><text x="431.80" y="458.84" font-size="9.6" text-anchor="middle" textLength="28" lengthAdjust="spacingAndGlyphs">6 <tspan font-size="7.6" dy="-0.3">@</tspan><tspan dy="0.3"> 37</tspan></text><text x="476.80" y="458.84" font-size="9.6" text-anchor="middle" textLength="28" lengthAdjust="spacingAndGlyphs">5 <tspan font-size="7.6" dy="-0.3">@</tspan><tspan dy="0.3"> 41</tspan></text><text x="523.00" y="458.14" font-size="9.2" text-anchor="middle" textLength="12" lengthAdjust="spacingAndGlyphs">NR</text><text x="529.80" y="453.14" font-size="4.2" text-anchor="start">i</text><text x="568.00" y="458.14" font-size="9.2" text-anchor="middle" textLength="12" lengthAdjust="spacingAndGlyphs">NR</text><text x="611.80" y="458.84" font-size="9.6" text-anchor="middle" textLength="28" lengthAdjust="spacingAndGlyphs">6 <tspan font-size="7.6" dy="-0.3">@</tspan><tspan dy="0.3"> 34</tspan></text><text x="656.80" y="458.84" font-size="9.6" text-anchor="middle" textLength="28" lengthAdjust="spacingAndGlyphs">6 <tspan font-size="7.6" dy="-0.3">@</tspan><tspan dy="0.3"> 43</tspan></text><text x="703.00" y="458.14" font-size="9.2" text-anchor="middle" textLength="12" lengthAdjust="spacingAndGlyphs">NR</text><text x="748.00" y="458.14" font-size="9.2" text-anchor="middle" textLength="12" lengthAdjust="spacingAndGlyphs">NR</text><text x="182.00" y="476.76" font-size="9.2" text-anchor="middle">8</text><text x="251.80" y="476.86" font-size="9.6" text-anchor="middle" textLength="28" lengthAdjust="spacingAndGlyphs">6 <tspan font-size="7.6" dy="-0.3">@</tspan><tspan dy="0.3"> 43</tspan></text><text x="296.80" y="476.86" font-size="9.6" text-anchor="middle" textLength="28" lengthAdjust="spacingAndGlyphs">5 <tspan font-size="7.6" dy="-0.3">@</tspan><tspan dy="0.3"> 47</tspan></text><text x="343.00" y="476.16" font-size="9.2" text-anchor="middle" textLength="12" lengthAdjust="spacingAndGlyphs">NR</text><text x="349.80" y="471.16" font-size="4.2" text-anchor="start">i</text><text x="388.00" y="476.16" font-size="9.2" text-anchor="middle" textLength="12" lengthAdjust="spacingAndGlyphs">NR</text><text x="431.80" y="476.86" font-size="9.6" text-anchor="middle" textLength="28" lengthAdjust="spacingAndGlyphs">6 <tspan font-size="7.6" dy="-0.3">@</tspan><tspan dy="0.3"> 34</tspan></text><text x="476.80" y="476.86" font-size="9.6" text-anchor="middle" textLength="28" lengthAdjust="spacingAndGlyphs">6 <tspan font-size="7.6" dy="-0.3">@</tspan><tspan dy="0.3"> 43</tspan></text><text x="523.00" y="476.16" font-size="9.2" text-anchor="middle" textLength="12" lengthAdjust="spacingAndGlyphs">NR</text><text x="568.00" y="476.16" font-size="9.2" text-anchor="middle" textLength="12" lengthAdjust="spacingAndGlyphs">NR</text><text x="611.80" y="476.86" font-size="9.6" text-anchor="middle" textLength="28" lengthAdjust="spacingAndGlyphs">6 <tspan font-size="7.6" dy="-0.3">@</tspan><tspan dy="0.3"> 27</tspan></text><text x="656.80" y="476.86" font-size="9.6" text-anchor="middle" textLength="28" lengthAdjust="spacingAndGlyphs">6 <tspan font-size="7.6" dy="-0.3">@</tspan><tspan dy="0.3"> 32</tspan></text><text x="701.80" y="476.86" font-size="9.6" text-anchor="middle" textLength="28" lengthAdjust="spacingAndGlyphs">6 <tspan font-size="7.6" dy="-0.3">@</tspan><tspan dy="0.3"> 44</tspan></text><text x="748.00" y="476.16" font-size="9.2" text-anchor="middle" textLength="12" lengthAdjust="spacingAndGlyphs">NR</text><text x="105.40" y="540.94" font-size="9.2" text-anchor="middle">9</text><text x="182.00" y="494.78" font-size="9.2" text-anchor="middle">4</text><text x="253.00" y="494.18" font-size="9.2" text-anchor="middle" textLength="12" lengthAdjust="spacingAndGlyphs">NR</text><text x="298.00" y="494.18" font-size="9.2" text-anchor="middle" textLength="12" lengthAdjust="spacingAndGlyphs">NR</text><text x="343.00" y="494.18" font-size="9.2" text-anchor="middle" textLength="12" lengthAdjust="spacingAndGlyphs">NR</text><text x="388.00" y="494.18" font-size="9.2" text-anchor="middle" textLength="12" lengthAdjust="spacingAndGlyphs">NR</text><text x="433.00" y="494.18" font-size="9.2" text-anchor="middle" textLength="12" lengthAdjust="spacingAndGlyphs">NR</text><text x="478.00" y="494.18" font-size="9.2" text-anchor="middle" textLength="12" lengthAdjust="spacingAndGlyphs">NR</text><text x="523.00" y="494.18" font-size="9.2" text-anchor="middle" textLength="12" lengthAdjust="spacingAndGlyphs">NR</text><text x="568.00" y="494.18" font-size="9.2" text-anchor="middle" textLength="12" lengthAdjust="spacingAndGlyphs">NR</text><text x="613.00" y="494.18" font-size="9.2" text-anchor="middle" textLength="12" lengthAdjust="spacingAndGlyphs">NR</text><text x="658.00" y="494.18" font-size="9.2" text-anchor="middle" textLength="12" lengthAdjust="spacingAndGlyphs">NR</text><text x="703.00" y="494.18" font-size="9.2" text-anchor="middle" textLength="12" lengthAdjust="spacingAndGlyphs">NR</text><text x="748.00" y="494.18" font-size="9.2" text-anchor="middle" textLength="12" lengthAdjust="spacingAndGlyphs">NR</text><text x="182.00" y="512.80" font-size="9.2" text-anchor="middle">5</text><text x="253.00" y="512.20" font-size="9.2" text-anchor="middle" textLength="12" lengthAdjust="spacingAndGlyphs">NR</text><text x="298.00" y="512.20" font-size="9.2" text-anchor="middle" textLength="12" lengthAdjust="spacingAndGlyphs">NR</text><text x="343.00" y="512.20" font-size="9.2" text-anchor="middle" textLength="12" lengthAdjust="spacingAndGlyphs">NR</text><text x="388.00" y="512.20" font-size="9.2" text-anchor="middle" textLength="12" lengthAdjust="spacingAndGlyphs">NR</text><text x="431.80" y="512.90" font-size="9.6" text-anchor="middle" textLength="28" lengthAdjust="spacingAndGlyphs">4 <tspan font-size="7.6" dy="-0.3">@</tspan><tspan dy="0.3"> 35</tspan></text><text x="478.00" y="512.20" font-size="9.2" text-anchor="middle" textLength="12" lengthAdjust="spacingAndGlyphs">NR</text><text x="484.80" y="507.20" font-size="4.2" text-anchor="start">i</text><text x="523.00" y="512.20" font-size="9.2" text-anchor="middle" textLength="12" lengthAdjust="spacingAndGlyphs">NR</text><text x="568.00" y="512.20" font-size="9.2" text-anchor="middle" textLength="12" lengthAdjust="spacingAndGlyphs">NR</text><text x="611.80" y="512.90" font-size="9.6" text-anchor="middle" textLength="28" lengthAdjust="spacingAndGlyphs">5 <tspan font-size="7.6" dy="-0.3">@</tspan><tspan dy="0.3"> 40</tspan></text><text x="658.00" y="512.20" font-size="9.2" text-anchor="middle" textLength="12" lengthAdjust="spacingAndGlyphs">NR</text><text x="703.00" y="512.20" font-size="9.2" text-anchor="middle" textLength="12" lengthAdjust="spacingAndGlyphs">NR</text><text x="748.00" y="512.20" font-size="9.2" text-anchor="middle" textLength="12" lengthAdjust="spacingAndGlyphs">NR</text><text x="182.00" y="530.82" font-size="9.2" text-anchor="middle">6</text><text x="251.80" y="530.92" font-size="9.6" text-anchor="middle" textLength="28" lengthAdjust="spacingAndGlyphs">4 <tspan font-size="7.6" dy="-0.3">@</tspan><tspan dy="0.3"> 34</tspan></text><text x="298.00" y="530.22" font-size="9.2" text-anchor="middle" textLength="12" lengthAdjust="spacingAndGlyphs">NR</text><text x="304.80" y="525.22" font-size="4.2" text-anchor="start">i</text><text x="343.00" y="530.22" font-size="9.2" text-anchor="middle" textLength="12" lengthAdjust="spacingAndGlyphs">NR</text><text x="388.00" y="530.22" font-size="9.2" text-anchor="middle" textLength="12" lengthAdjust="spacingAndGlyphs">NR</text><text x="431.80" y="530.92" font-size="9.6" text-anchor="middle" textLength="28" lengthAdjust="spacingAndGlyphs">6 <tspan font-size="7.6" dy="-0.3">@</tspan><tspan dy="0.3"> 48</tspan></text><text x="478.00" y="530.22" font-size="9.2" text-anchor="middle" textLength="12" lengthAdjust="spacingAndGlyphs">NR</text><text x="523.00" y="530.22" font-size="9.2" text-anchor="middle" textLength="12" lengthAdjust="spacingAndGlyphs">NR</text><text x="568.00" y="530.22" font-size="9.2" text-anchor="middle" textLength="12" lengthAdjust="spacingAndGlyphs">NR</text><text x="611.80" y="530.92" font-size="9.6" text-anchor="middle" textLength="28" lengthAdjust="spacingAndGlyphs">6 <tspan font-size="7.6" dy="-0.3">@</tspan><tspan dy="0.3"> 36</tspan></text><text x="656.80" y="530.92" font-size="9.6" text-anchor="middle" textLength="28" lengthAdjust="spacingAndGlyphs">6 <tspan font-size="7.6" dy="-0.3">@</tspan><tspan dy="0.3"> 39</tspan></text><text x="703.00" y="530.22" font-size="9.2" text-anchor="middle" textLength="12" lengthAdjust="spacingAndGlyphs">NR</text><text x="709.80" y="525.22" font-size="4.2" text-anchor="start">i</text><text x="748.00" y="530.22" font-size="9.2" text-anchor="middle" textLength="12" lengthAdjust="spacingAndGlyphs">NR</text><text x="182.00" y="548.84" font-size="9.2" text-anchor="middle">7</text><text x="251.80" y="548.94" font-size="9.6" text-anchor="middle" textLength="28" lengthAdjust="spacingAndGlyphs">5 <tspan font-size="7.6" dy="-0.3">@</tspan><tspan dy="0.3"> 36</tspan></text><text x="298.00" y="548.24" font-size="9.2" text-anchor="middle" textLength="12" lengthAdjust="spacingAndGlyphs">NR</text><text x="343.00" y="548.24" font-size="9.2" text-anchor="middle" textLength="12" lengthAdjust="spacingAndGlyphs">NR</text><text x="388.00" y="548.24" font-size="9.2" text-anchor="middle" textLength="12" lengthAdjust="spacingAndGlyphs">NR</text><text x="431.80" y="548.94" font-size="9.6" text-anchor="middle" textLength="28" lengthAdjust="spacingAndGlyphs">6 <tspan font-size="7.6" dy="-0.3">@</tspan><tspan dy="0.3"> 34</tspan></text><text x="476.80" y="548.94" font-size="9.6" text-anchor="middle" textLength="28" lengthAdjust="spacingAndGlyphs">5 <tspan font-size="7.6" dy="-0.3">@</tspan><tspan dy="0.3"> 37</tspan></text><text x="523.00" y="548.24" font-size="9.2" text-anchor="middle" textLength="12" lengthAdjust="spacingAndGlyphs">NR</text><text x="568.00" y="548.24" font-size="9.2" text-anchor="middle" textLength="12" lengthAdjust="spacingAndGlyphs">NR</text><text x="611.80" y="548.94" font-size="9.6" text-anchor="middle" textLength="28" lengthAdjust="spacingAndGlyphs">6 <tspan font-size="7.6" dy="-0.3">@</tspan><tspan dy="0.3"> 33</tspan></text><text x="656.80" y="548.94" font-size="9.6" text-anchor="middle" textLength="28" lengthAdjust="spacingAndGlyphs">6 <tspan font-size="7.6" dy="-0.3">@</tspan><tspan dy="0.3"> 38</tspan></text><text x="701.80" y="548.94" font-size="9.6" text-anchor="middle" textLength="28" lengthAdjust="spacingAndGlyphs">5 <tspan font-size="7.6" dy="-0.3">@</tspan><tspan dy="0.3"> 37</tspan></text><text x="748.00" y="548.24" font-size="9.2" text-anchor="middle" textLength="12" lengthAdjust="spacingAndGlyphs">NR</text><text x="754.80" y="543.24" font-size="4.2" text-anchor="start">i</text><text x="182.00" y="566.86" font-size="9.2" text-anchor="middle">8</text><text x="251.80" y="566.96" font-size="9.6" text-anchor="middle" textLength="28" lengthAdjust="spacingAndGlyphs">6 <tspan font-size="7.6" dy="-0.3">@</tspan><tspan dy="0.3"> 38</tspan></text><text x="296.80" y="566.96" font-size="9.6" text-anchor="middle" textLength="28" lengthAdjust="spacingAndGlyphs">5 <tspan font-size="7.6" dy="-0.3">@</tspan><tspan dy="0.3"> 41</tspan></text><text x="343.00" y="566.26" font-size="9.2" text-anchor="middle" textLength="12" lengthAdjust="spacingAndGlyphs">NR</text><text x="349.80" y="561.26" font-size="4.2" text-anchor="start">i</text><text x="388.00" y="566.26" font-size="9.2" text-anchor="middle" textLength="12" lengthAdjust="spacingAndGlyphs">NR</text><text x="431.80" y="566.96" font-size="9.6" text-anchor="middle" textLength="28" lengthAdjust="spacingAndGlyphs">6 <tspan font-size="7.6" dy="-0.3">@</tspan><tspan dy="0.3"> 33</tspan></text><text x="476.80" y="566.96" font-size="9.6" text-anchor="middle" textLength="28" lengthAdjust="spacingAndGlyphs">6 <tspan font-size="7.6" dy="-0.3">@</tspan><tspan dy="0.3"> 38</tspan></text><text x="521.80" y="566.96" font-size="9.6" text-anchor="middle" textLength="28" lengthAdjust="spacingAndGlyphs">5 <tspan font-size="7.6" dy="-0.3">@</tspan><tspan dy="0.3"> 37</tspan></text><text x="568.00" y="566.26" font-size="9.2" text-anchor="middle" textLength="12" lengthAdjust="spacingAndGlyphs">NR</text><text x="574.80" y="561.26" font-size="4.2" text-anchor="start">i</text><text x="611.80" y="566.96" font-size="9.6" text-anchor="middle" textLength="28" lengthAdjust="spacingAndGlyphs">6 <tspan font-size="7.6" dy="-0.3">@</tspan><tspan dy="0.3"> 24</tspan></text><text x="656.80" y="566.96" font-size="9.6" text-anchor="middle" textLength="28" lengthAdjust="spacingAndGlyphs">6 <tspan font-size="7.6" dy="-0.3">@</tspan><tspan dy="0.3"> 29</tspan></text><text x="701.80" y="566.96" font-size="9.6" text-anchor="middle" textLength="28" lengthAdjust="spacingAndGlyphs">6 <tspan font-size="7.6" dy="-0.3">@</tspan><tspan dy="0.3"> 39</tspan></text><text x="746.80" y="566.96" font-size="9.6" text-anchor="middle" textLength="28" lengthAdjust="spacingAndGlyphs">4 <tspan font-size="7.6" dy="-0.3">@</tspan><tspan dy="0.3"> 48</tspan></text><text x="762.50" y="561.26" font-size="4.2" text-anchor="start">m</text><text x="182.00" y="584.88" font-size="9.2" text-anchor="middle">9</text><text x="251.80" y="584.98" font-size="9.6" text-anchor="middle" textLength="28" lengthAdjust="spacingAndGlyphs">6 <tspan font-size="7.6" dy="-0.3">@</tspan><tspan dy="0.3"> 34</tspan></text><text x="296.80" y="584.98" font-size="9.6" text-anchor="middle" textLength="28" lengthAdjust="spacingAndGlyphs">6 <tspan font-size="7.6" dy="-0.3">@</tspan><tspan dy="0.3"> 46</tspan></text><text x="343.00" y="584.28" font-size="9.2" text-anchor="middle" textLength="12" lengthAdjust="spacingAndGlyphs">NR</text><text x="388.00" y="584.28" font-size="9.2" text-anchor="middle" textLength="12" lengthAdjust="spacingAndGlyphs">NR</text><text x="431.80" y="584.98" font-size="9.6" text-anchor="middle" textLength="28" lengthAdjust="spacingAndGlyphs">6 <tspan font-size="7.6" dy="-0.3">@</tspan><tspan dy="0.3"> 26</tspan></text><text x="476.80" y="584.98" font-size="9.6" text-anchor="middle" textLength="28" lengthAdjust="spacingAndGlyphs">6 <tspan font-size="7.6" dy="-0.3">@</tspan><tspan dy="0.3"> 30</tspan></text><text x="521.80" y="584.98" font-size="9.6" text-anchor="middle" textLength="28" lengthAdjust="spacingAndGlyphs">6 <tspan font-size="7.6" dy="-0.3">@</tspan><tspan dy="0.3"> 41</tspan></text><text x="568.00" y="584.28" font-size="9.2" text-anchor="middle" textLength="12" lengthAdjust="spacingAndGlyphs">NR</text><text x="611.80" y="584.98" font-size="9.6" text-anchor="middle" textLength="28" lengthAdjust="spacingAndGlyphs">6 <tspan font-size="7.6" dy="-0.3">@</tspan><tspan dy="0.3"> 19</tspan></text><text x="656.80" y="584.98" font-size="9.6" text-anchor="middle" textLength="28" lengthAdjust="spacingAndGlyphs">6 <tspan font-size="7.6" dy="-0.3">@</tspan><tspan dy="0.3"> 23</tspan></text><text x="701.80" y="584.98" font-size="9.6" text-anchor="middle" textLength="28" lengthAdjust="spacingAndGlyphs">6 <tspan font-size="7.6" dy="-0.3">@</tspan><tspan dy="0.3"> 30</tspan></text><text x="746.80" y="584.98" font-size="9.6" text-anchor="middle" textLength="28" lengthAdjust="spacingAndGlyphs">6 <tspan font-size="7.6" dy="-0.3">@</tspan><tspan dy="0.3"> 39</tspan></text><text x="108.30" y="654.50" font-size="9.2" text-anchor="middle">10</text><text x="182.00" y="602.90" font-size="9.2" text-anchor="middle">4</text><text x="253.00" y="602.30" font-size="9.2" text-anchor="middle" textLength="12" lengthAdjust="spacingAndGlyphs">NR</text><text x="298.00" y="602.30" font-size="9.2" text-anchor="middle" textLength="12" lengthAdjust="spacingAndGlyphs">NR</text><text x="343.00" y="602.30" font-size="9.2" text-anchor="middle" textLength="12" lengthAdjust="spacingAndGlyphs">NR</text><text x="388.00" y="602.30" font-size="9.2" text-anchor="middle" textLength="12" lengthAdjust="spacingAndGlyphs">NR</text><text x="433.00" y="602.30" font-size="9.2" text-anchor="middle" textLength="12" lengthAdjust="spacingAndGlyphs">NR</text><text x="478.00" y="602.30" font-size="9.2" text-anchor="middle" textLength="12" lengthAdjust="spacingAndGlyphs">NR</text><text x="523.00" y="602.30" font-size="9.2" text-anchor="middle" textLength="12" lengthAdjust="spacingAndGlyphs">NR</text><text x="568.00" y="602.30" font-size="9.2" text-anchor="middle" textLength="12" lengthAdjust="spacingAndGlyphs">NR</text><text x="613.00" y="602.30" font-size="9.2" text-anchor="middle" textLength="12" lengthAdjust="spacingAndGlyphs">NR</text><text x="658.00" y="602.30" font-size="9.2" text-anchor="middle" textLength="12" lengthAdjust="spacingAndGlyphs">NR</text><text x="703.00" y="602.30" font-size="9.2" text-anchor="middle" textLength="12" lengthAdjust="spacingAndGlyphs">NR</text><text x="748.00" y="602.30" font-size="9.2" text-anchor="middle" textLength="12" lengthAdjust="spacingAndGlyphs">NR</text><text x="182.00" y="620.92" font-size="9.2" text-anchor="middle">5</text><text x="253.00" y="620.32" font-size="9.2" text-anchor="middle" textLength="12" lengthAdjust="spacingAndGlyphs">NR</text><text x="298.00" y="620.32" font-size="9.2" text-anchor="middle" textLength="12" lengthAdjust="spacingAndGlyphs">NR</text><text x="343.00" y="620.32" font-size="9.2" text-anchor="middle" textLength="12" lengthAdjust="spacingAndGlyphs">NR</text><text x="388.00" y="620.32" font-size="9.2" text-anchor="middle" textLength="12" lengthAdjust="spacingAndGlyphs">NR</text><text x="431.80" y="621.02" font-size="9.6" text-anchor="middle" textLength="28" lengthAdjust="spacingAndGlyphs">4 <tspan font-size="7.6" dy="-0.3">@</tspan><tspan dy="0.3"> 33</tspan></text><text x="478.00" y="620.32" font-size="9.2" text-anchor="middle" textLength="12" lengthAdjust="spacingAndGlyphs">NR</text><text x="484.80" y="615.32" font-size="4.2" text-anchor="start">i</text><text x="523.00" y="620.32" font-size="9.2" text-anchor="middle" textLength="12" lengthAdjust="spacingAndGlyphs">NR</text><text x="568.00" y="620.32" font-size="9.2" text-anchor="middle" textLength="12" lengthAdjust="spacingAndGlyphs">NR</text><text x="611.80" y="621.02" font-size="9.6" text-anchor="middle" textLength="28" lengthAdjust="spacingAndGlyphs">5 <tspan font-size="7.6" dy="-0.3">@</tspan><tspan dy="0.3"> 38</tspan></text><text x="658.00" y="620.32" font-size="9.2" text-anchor="middle" textLength="12" lengthAdjust="spacingAndGlyphs">NR</text><text x="703.00" y="620.32" font-size="9.2" text-anchor="middle" textLength="12" lengthAdjust="spacingAndGlyphs">NR</text><text x="748.00" y="620.32" font-size="9.2" text-anchor="middle" textLength="12" lengthAdjust="spacingAndGlyphs">NR</text><text x="182.00" y="638.94" font-size="9.2" text-anchor="middle">6</text><text x="251.80" y="639.04" font-size="9.6" text-anchor="middle" textLength="28" lengthAdjust="spacingAndGlyphs">5 <tspan font-size="7.6" dy="-0.3">@</tspan><tspan dy="0.3"> 48</tspan></text><text x="298.00" y="638.34" font-size="9.2" text-anchor="middle" textLength="12" lengthAdjust="spacingAndGlyphs">NR</text><text x="304.80" y="633.34" font-size="4.2" text-anchor="start">i</text><text x="343.00" y="638.34" font-size="9.2" text-anchor="middle" textLength="12" lengthAdjust="spacingAndGlyphs">NR</text><text x="388.00" y="638.34" font-size="9.2" text-anchor="middle" textLength="12" lengthAdjust="spacingAndGlyphs">NR</text><text x="431.80" y="639.04" font-size="9.6" text-anchor="middle" textLength="28" lengthAdjust="spacingAndGlyphs">6 <tspan font-size="7.6" dy="-0.3">@</tspan><tspan dy="0.3"> 45</tspan></text><text x="478.00" y="638.34" font-size="9.2" text-anchor="middle" textLength="12" lengthAdjust="spacingAndGlyphs">NR</text><text x="523.00" y="638.34" font-size="9.2" text-anchor="middle" textLength="12" lengthAdjust="spacingAndGlyphs">NR</text><text x="568.00" y="638.34" font-size="9.2" text-anchor="middle" textLength="12" lengthAdjust="spacingAndGlyphs">NR</text><text x="611.80" y="639.04" font-size="9.6" text-anchor="middle" textLength="28" lengthAdjust="spacingAndGlyphs">6 <tspan font-size="7.6" dy="-0.3">@</tspan><tspan dy="0.3"> 34</tspan></text><text x="656.80" y="639.04" font-size="9.6" text-anchor="middle" textLength="28" lengthAdjust="spacingAndGlyphs">5 <tspan font-size="7.6" dy="-0.3">@</tspan><tspan dy="0.3"> 37</tspan></text><text x="703.00" y="638.34" font-size="9.2" text-anchor="middle" textLength="12" lengthAdjust="spacingAndGlyphs">NR</text><text x="748.00" y="638.34" font-size="9.2" text-anchor="middle" textLength="12" lengthAdjust="spacingAndGlyphs">NR</text><text x="182.00" y="656.96" font-size="9.2" text-anchor="middle">7</text><text x="251.80" y="657.06" font-size="9.6" text-anchor="middle" textLength="28" lengthAdjust="spacingAndGlyphs">6 <tspan font-size="7.6" dy="-0.3">@</tspan><tspan dy="0.3"> 47</tspan></text><text x="298.00" y="656.36" font-size="9.2" text-anchor="middle" textLength="12" lengthAdjust="spacingAndGlyphs">NR</text><text x="343.00" y="656.36" font-size="9.2" text-anchor="middle" textLength="12" lengthAdjust="spacingAndGlyphs">NR</text><text x="388.00" y="656.36" font-size="9.2" text-anchor="middle" textLength="12" lengthAdjust="spacingAndGlyphs">NR</text><text x="431.80" y="657.06" font-size="9.6" text-anchor="middle" textLength="28" lengthAdjust="spacingAndGlyphs">6 <tspan font-size="7.6" dy="-0.3">@</tspan><tspan dy="0.3"> 34</tspan></text><text x="476.80" y="657.06" font-size="9.6" text-anchor="middle" textLength="28" lengthAdjust="spacingAndGlyphs">6 <tspan font-size="7.6" dy="-0.3">@</tspan><tspan dy="0.3"> 48</tspan></text><text x="523.00" y="656.36" font-size="9.2" text-anchor="middle" textLength="12" lengthAdjust="spacingAndGlyphs">NR</text><text x="568.00" y="656.36" font-size="9.2" text-anchor="middle" textLength="12" lengthAdjust="spacingAndGlyphs">NR</text><text x="611.80" y="657.06" font-size="9.6" text-anchor="middle" textLength="28" lengthAdjust="spacingAndGlyphs">6 <tspan font-size="7.6" dy="-0.3">@</tspan><tspan dy="0.3"> 30</tspan></text><text x="656.80" y="657.06" font-size="9.6" text-anchor="middle" textLength="28" lengthAdjust="spacingAndGlyphs">6 <tspan font-size="7.6" dy="-0.3">@</tspan><tspan dy="0.3"> 35</tspan></text><text x="701.80" y="657.06" font-size="9.6" text-anchor="middle" textLength="28" lengthAdjust="spacingAndGlyphs">6 <tspan font-size="7.6" dy="-0.3">@</tspan><tspan dy="0.3"> 48</tspan></text><text x="748.00" y="656.36" font-size="9.2" text-anchor="middle" textLength="12" lengthAdjust="spacingAndGlyphs">NR</text><text x="754.80" y="651.36" font-size="4.2" text-anchor="start">i</text><text x="182.00" y="674.98" font-size="9.2" text-anchor="middle">8</text><text x="251.80" y="675.08" font-size="9.6" text-anchor="middle" textLength="28" lengthAdjust="spacingAndGlyphs">6 <tspan font-size="7.6" dy="-0.3">@</tspan><tspan dy="0.3"> 40</tspan></text><text x="296.80" y="675.08" font-size="9.6" text-anchor="middle" textLength="28" lengthAdjust="spacingAndGlyphs">6 <tspan font-size="7.6" dy="-0.3">@</tspan><tspan dy="0.3"> 41</tspan></text><text x="343.00" y="674.38" font-size="9.2" text-anchor="middle" textLength="12" lengthAdjust="spacingAndGlyphs">NR</text><text x="388.00" y="674.38" font-size="9.2" text-anchor="middle" textLength="12" lengthAdjust="spacingAndGlyphs">NR</text><text x="431.80" y="675.08" font-size="9.6" text-anchor="middle" textLength="28" lengthAdjust="spacingAndGlyphs">6 <tspan font-size="7.6" dy="-0.3">@</tspan><tspan dy="0.3"> 28</tspan></text><text x="476.80" y="675.08" font-size="9.6" text-anchor="middle" textLength="28" lengthAdjust="spacingAndGlyphs">6 <tspan font-size="7.6" dy="-0.3">@</tspan><tspan dy="0.3"> 34</tspan></text><text x="521.80" y="675.08" font-size="9.6" text-anchor="middle" textLength="28" lengthAdjust="spacingAndGlyphs">6 <tspan font-size="7.6" dy="-0.3">@</tspan><tspan dy="0.3"> 39</tspan></text><text x="568.00" y="674.38" font-size="9.2" text-anchor="middle" textLength="12" lengthAdjust="spacingAndGlyphs">NR</text><text x="611.80" y="675.08" font-size="9.6" text-anchor="middle" textLength="28" lengthAdjust="spacingAndGlyphs">6 <tspan font-size="7.6" dy="-0.3">@</tspan><tspan dy="0.3"> 22</tspan></text><text x="656.80" y="675.08" font-size="9.6" text-anchor="middle" textLength="28" lengthAdjust="spacingAndGlyphs">6 <tspan font-size="7.6" dy="-0.3">@</tspan><tspan dy="0.3"> 27</tspan></text><text x="701.80" y="675.08" font-size="9.6" text-anchor="middle" textLength="28" lengthAdjust="spacingAndGlyphs">6 <tspan font-size="7.6" dy="-0.3">@</tspan><tspan dy="0.3"> 35</tspan></text><text x="748.00" y="674.38" font-size="9.2" text-anchor="middle" textLength="12" lengthAdjust="spacingAndGlyphs">NR</text><text x="182.00" y="693.00" font-size="9.2" text-anchor="middle">9</text><text x="253.00" y="692.40" font-size="9.2" text-anchor="middle" textLength="12" lengthAdjust="spacingAndGlyphs">NR</text><text x="298.00" y="692.40" font-size="9.2" text-anchor="middle" textLength="12" lengthAdjust="spacingAndGlyphs">NR</text><text x="343.00" y="692.40" font-size="9.2" text-anchor="middle" textLength="12" lengthAdjust="spacingAndGlyphs">NR</text><text x="388.00" y="692.40" font-size="9.2" text-anchor="middle" textLength="12" lengthAdjust="spacingAndGlyphs">NR</text><text x="433.00" y="692.40" font-size="9.2" text-anchor="middle" textLength="12" lengthAdjust="spacingAndGlyphs">NR</text><text x="478.00" y="692.40" font-size="9.2" text-anchor="middle" textLength="12" lengthAdjust="spacingAndGlyphs">NR</text><text x="523.00" y="692.40" font-size="9.2" text-anchor="middle" textLength="12" lengthAdjust="spacingAndGlyphs">NR</text><text x="568.00" y="692.40" font-size="9.2" text-anchor="middle" textLength="12" lengthAdjust="spacingAndGlyphs">NR</text><text x="613.00" y="692.40" font-size="9.2" text-anchor="middle" textLength="12" lengthAdjust="spacingAndGlyphs">NR</text><text x="658.00" y="692.40" font-size="9.2" text-anchor="middle" textLength="12" lengthAdjust="spacingAndGlyphs">NR</text><text x="703.00" y="692.40" font-size="9.2" text-anchor="middle" textLength="12" lengthAdjust="spacingAndGlyphs">NR</text><text x="748.00" y="692.40" font-size="9.2" text-anchor="middle" textLength="12" lengthAdjust="spacingAndGlyphs">NR</text><text x="182.00" y="711.02" font-size="9.2" text-anchor="middle">10</text><text x="253.00" y="710.42" font-size="9.2" text-anchor="middle" textLength="12" lengthAdjust="spacingAndGlyphs">NR</text><text x="298.00" y="710.42" font-size="9.2" text-anchor="middle" textLength="12" lengthAdjust="spacingAndGlyphs">NR</text><text x="343.00" y="710.42" font-size="9.2" text-anchor="middle" textLength="12" lengthAdjust="spacingAndGlyphs">NR</text><text x="388.00" y="710.42" font-size="9.2" text-anchor="middle" textLength="12" lengthAdjust="spacingAndGlyphs">NR</text><text x="433.00" y="710.42" font-size="9.2" text-anchor="middle" textLength="12" lengthAdjust="spacingAndGlyphs">NR</text><text x="478.00" y="710.42" font-size="9.2" text-anchor="middle" textLength="12" lengthAdjust="spacingAndGlyphs">NR</text><text x="523.00" y="710.42" font-size="9.2" text-anchor="middle" textLength="12" lengthAdjust="spacingAndGlyphs">NR</text><text x="568.00" y="710.42" font-size="9.2" text-anchor="middle" textLength="12" lengthAdjust="spacingAndGlyphs">NR</text><text x="613.00" y="710.42" font-size="9.2" text-anchor="middle" textLength="12" lengthAdjust="spacingAndGlyphs">NR</text><text x="658.00" y="710.42" font-size="9.2" text-anchor="middle" textLength="12" lengthAdjust="spacingAndGlyphs">NR</text><text x="703.00" y="710.42" font-size="9.2" text-anchor="middle" textLength="12" lengthAdjust="spacingAndGlyphs">NR</text><text x="748.00" y="710.42" font-size="9.2" text-anchor="middle" textLength="12" lengthAdjust="spacingAndGlyphs">NR</text><line x1="886.90" y1="588.70" x2="886.90" y2="684.00" stroke="#1a1a1a" stroke-width="1.4"/><line x1="915.00" y1="588.70" x2="915.00" y2="684.00" stroke="#1a1a1a" stroke-width="1.4"/><line x1="886.90" y1="588.70" x2="956.00" y2="588.70" stroke="#1a1a1a" stroke-width="1.6"/><line x1="915.00" y1="638.70" x2="956.00" y2="638.70" stroke="#1a1a1a" stroke-width="1.6"/><line x1="884.40" y1="585.70" x2="889.40" y2="591.70" stroke="#1a1a1a" stroke-width="1.2"/><line x1="912.50" y1="585.70" x2="917.50" y2="591.70" stroke="#1a1a1a" stroke-width="1.2"/><line x1="912.50" y1="635.70" x2="917.50" y2="641.70" stroke="#1a1a1a" stroke-width="1.2"/><text transform="translate(909.3,659.0) rotate(-90)" font-size="7.2" font-weight="400" fill="#333" textLength="68" lengthAdjust="spacingAndGlyphs">PONY WALL HEIGHT</text></svg></div>
  <div class="a" style="left:0;top:158px;width:14px;height:106px;background:#1f2329;border-radius:0 5px 5px 0;overflow:hidden"><div class="a" style="left:-4.5px;top:34px;font-size:14px;font-weight:700;color:#fff">s</div></div>
</div>
<div id="foot">
  <div class="a" style="left:25.5px;top:20px;width:50.5px;height:50.5px;border-radius:50%;background:#333;border:1px solid #1c1c1c;box-shadow:inset 0 0 0 1px #5a5a5a,0 2px 14px rgba(0,0,0,.07)"></div>
  <svg class="a" style="left:25px;top:20px" width="51" height="51" viewBox="0 0 51 51"><defs><linearGradient id="ng" x1="0" y1="0" x2="0" y2="1"><stop offset="0" stop-color="#fff"/><stop offset="0.55" stop-color="#fff"/><stop offset="1" stop-color="#fff" stop-opacity="0"/></linearGradient><linearGradient id="ng2" x1="0" y1="0" x2="1" y2="1"><stop offset="0" stop-color="#fff"/><stop offset="0.7" stop-color="#fff"/><stop offset="1" stop-color="#fff" stop-opacity="0.2"/></linearGradient></defs><rect x="17.2" y="17.8" width="3" height="14.9" fill="#fff"/><path d="M18.2 17.8 L20.8 17.8 L34.3 34.6 L31.9 35.2 Z" fill="url(#ng2)"/><rect x="30.9" y="17.8" width="2.4" height="10" fill="url(#ng)"/></svg>
  <div class="a" style="left:213.5px;top:21.4px;width:137px;height:53px;background:#f1f5f9;border-radius:9px"></div>
  <svg class="a" style="left:244px;top:40px" width="22" height="18" viewBox="0 0 22 18"><path d="M3.6 9.1 H18.5 M9.3 3.4 L3.6 9.1 L9.3 14.8" fill="none" stroke="#1e293b" stroke-width="2.3" stroke-linecap="round" stroke-linejoin="round"/></svg>
  <div class="a" style="left:270.5px;top:38.5px;font-size:20px;font-weight:700;color:#1e293b">Back</div>
  <div class="a" style="left:1529.2px;top:21.7px;width:177px;height:52.5px;background:#2563eb;border-radius:9px"></div>
  <div class="a" style="left:1560.5px;top:38.2px;font-size:20.4px;font-weight:700;color:#fff">Continue</div>
  <svg class="a" style="left:1654px;top:40px" width="22" height="18" viewBox="0 0 22 18"><path d="M3.3 8.6 H18.8 M13.2 2.9 L18.8 8.6 L13.2 14.3" fill="none" stroke="#fff" stroke-width="2.3" stroke-linecap="round" stroke-linejoin="round"/></svg>
</div>
</body></html>
